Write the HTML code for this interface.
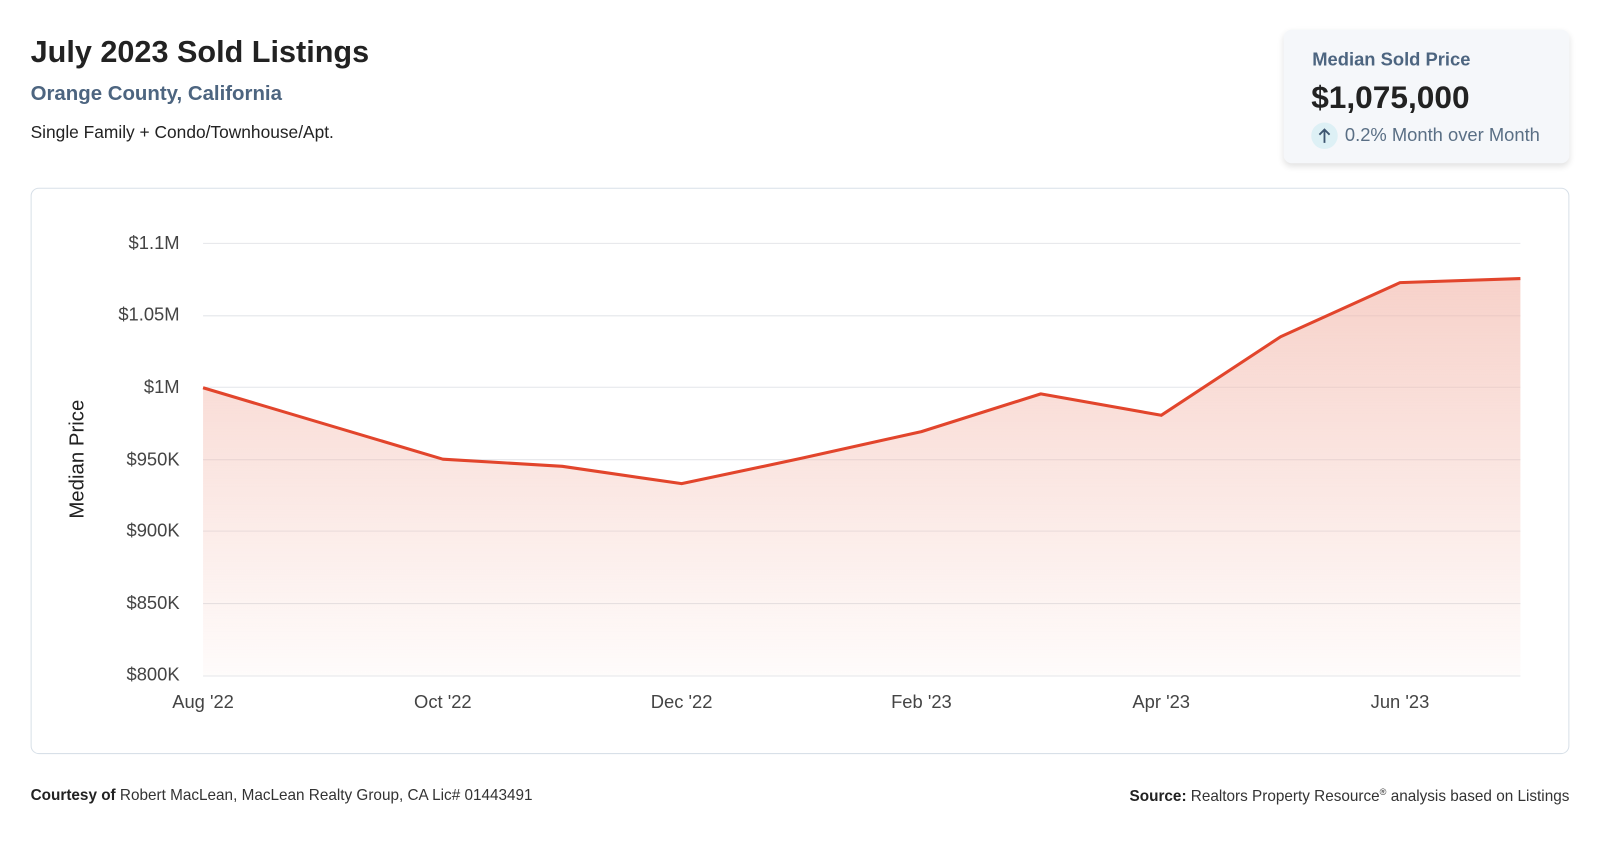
<!DOCTYPE html>
<html><head><meta charset="utf-8"><style>
body{margin:0;width:1600px;height:840px;background:#fff;font-family:"Liberation Sans",sans-serif;position:relative;overflow:hidden}
#w{position:absolute;left:0;top:0;width:1568px;height:824px;transform:scale(1.0204);transform-origin:0 0}
.a{position:absolute;white-space:nowrap}
</style></head><body><div id="w">
<div class="a" style="left:30px;top:35px;font-size:30px;font-weight:bold;color:#222">July 2023 Sold Listings</div>
<div class="a" style="left:30px;top:81px;font-size:20px;font-weight:bold;color:#4d6580">Orange County, California</div>
<div class="a" style="left:30px;top:120px;font-size:17px;color:#222">Single Family + Condo/Townhouse/Apt.</div>
<div class="a" style="left:1258px;top:29px;width:280px;height:131px;background:#f5f7fa;border-radius:8px;box-shadow:0 3px 6px rgba(0,0,0,0.12)"></div>
<div class="a" style="left:1286px;top:48px;font-size:18px;font-weight:bold;color:#4d6580">Median Sold Price</div>
<div class="a" style="left:1285px;top:78px;font-size:31px;font-weight:bold;color:#222">$1,075,000</div>
<div class="a" style="left:1285px;top:120px;width:26px;height:26px;border-radius:13px;background:#ddf0f5"></div>
<svg class="a" style="left:1285px;top:120px" width="26" height="26"><path d="M13 20V7M8 12l5-5 5 5" stroke="#3d5570" stroke-width="1.8" fill="none"/></svg>
<div class="a" style="left:1318px;top:122px;font-size:18px;color:#5a6f85">0.2% Month over Month</div>
<div class="a" style="left:30px;top:184px;width:1506px;height:553px;border:1px solid #d8e0e8;border-radius:8px"></div>
<svg class="a" style="left:0;top:0" width="1600" height="840">
<defs><linearGradient id="g" x1="0" y1="0" x2="0" y2="1"><stop offset="0" stop-color="#f3b9ad" stop-opacity="0.65"/><stop offset="1" stop-color="#f3b9ad" stop-opacity="0.05"/></linearGradient></defs>
<g stroke="#e4e6ea" stroke-width="1">
<line x1="199" x2="1490" y1="238.5" y2="238.5"/><line x1="199" x2="1490" y1="309.5" y2="309.5"/><line x1="199" x2="1490" y1="379.5" y2="379.5"/><line x1="199" x2="1490" y1="450.5" y2="450.5"/><line x1="199" x2="1490" y1="520.5" y2="520.5"/><line x1="199" x2="1490" y1="591.5" y2="591.5"/><line x1="199" x2="1490" y1="662.5" y2="662.5"/>
</g>
<path d="M199 380L434 450L551 457L668 474L786 449L903 423L1020 386L1138 407L1255 330L1372 277L1490 273L1490 662L199 662Z" fill="url(#g)"/>
<path d="M199 380L434 450L551 457L668 474L786 449L903 423L1020 386L1138 407L1255 330L1372 277L1490 273" stroke="#e2452c" stroke-width="3" fill="none" stroke-linejoin="round"/>
<g font-family="Liberation Sans" font-size="18" fill="#444" text-anchor="end">
<text x="176" y="244">$1.1M</text><text x="176" y="314">$1.05M</text><text x="176" y="385">$1M</text><text x="176" y="456">$950K</text><text x="176" y="526">$900K</text><text x="176" y="597">$850K</text><text x="176" y="667">$800K</text>
</g>
<g font-family="Liberation Sans" font-size="18" fill="#444" text-anchor="middle">
<text x="199" y="694">Aug '22</text><text x="434" y="694">Oct '22</text><text x="668" y="694">Dec '22</text><text x="903" y="694">Feb '23</text><text x="1138" y="694">Apr '23</text><text x="1372" y="694">Jun '23</text>
</g>
<text transform="translate(82,450) rotate(-90)" font-family="Liberation Sans" font-size="20" fill="#222" text-anchor="middle">Median Price</text>
</svg>
<div class="a" style="left:30px;top:771px;font-size:15px;color:#333"><b style="color:#222">Courtesy of</b> Robert MacLean, MacLean Realty Group, CA Lic# 01443491</div>
<div class="a" style="right:30px;top:771px;font-size:15px;color:#333"><b style="color:#222">Source:</b> Realtors Property Resource<sup style="font-size:9px">®</sup> analysis based on Listings</div>
</div></body></html>
